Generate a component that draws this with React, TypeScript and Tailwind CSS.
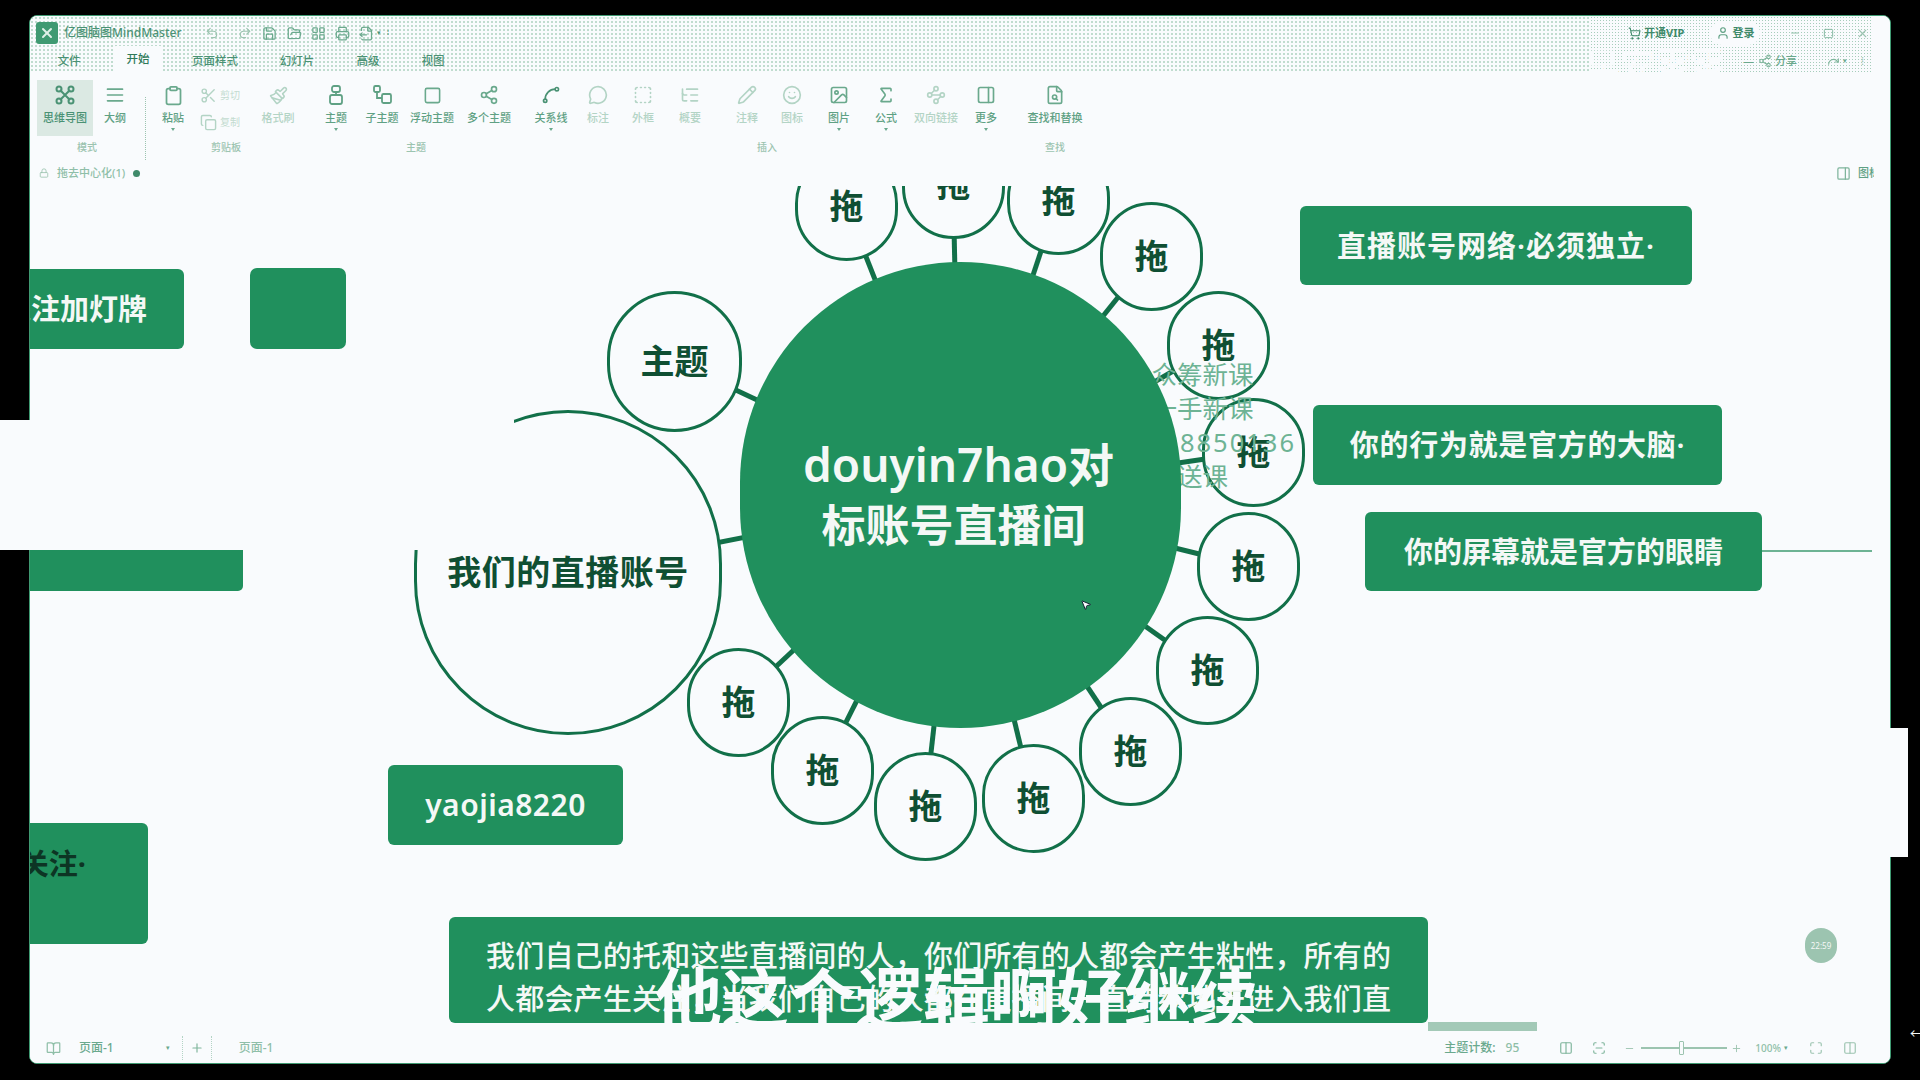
import React from "react";
import {
  AlignJustify, Clipboard, Scissors, Copy, Paintbrush, Square, Share2, Spline, MessageCircle, BoxSelect, ListTree,
  Pencil, Smile, Image, Sigma, Waypoints, PanelRight, FileSearch, ShoppingCart, User, Minus, X, Undo2, Redo2,
  Save, FolderOpen, LayoutGrid, Printer, FileOutput, Lock, Columns2, Plus, Maximize, ScanLine, BookOpen, MousePointer2, Redo,
} from "lucide-react";

const G = "#6aa98d";
const D = "#b3d4c5";

function MindIcon() {
  return (
    <svg width="22" height="22" viewBox="0 0 22 22" fill="none" stroke="#4a9274" strokeWidth="2">
      <path d="M6 6 16 16M16 6 6 16" />
      <circle cx="5" cy="5" r="2.5" />
      <circle cx="17" cy="5" r="2.5" />
      <circle cx="5" cy="17" r="2.5" />
      <circle cx="17" cy="17" r="2.5" />
    </svg>
  );
}
function TopicIcon() {
  return (
    <svg width="22" height="22" viewBox="0 0 22 22" fill="none" stroke="#5fa184" strokeWidth="1.8">
      <rect x="7" y="2" width="8" height="6" rx="2" />
      <path d="M11 8v3" />
      <rect x="5" y="11" width="12" height="9" rx="2" />
    </svg>
  );
}
function SubTopicIcon() {
  return (
    <svg width="22" height="22" viewBox="0 0 22 22" fill="none" stroke="#5fa184" strokeWidth="1.8">
      <rect x="3" y="2" width="6" height="6" rx="1.5" />
      <path d="M6 8v6h5" />
      <rect x="11" y="10" width="9" height="9" rx="1.5" />
    </svg>
  );
}

function Btn({ w, icon, label, dim, caret, active }: { w: string; icon: React.ReactNode; label: string; dim?: boolean; caret?: boolean; active?: boolean }) {
  return (
    <div className={`${w} h-[56px] flex flex-col items-center pt-[4px] ${active ? "bg-[#dbe9e3]" : ""}`}>
      <div className="h-[22px] flex items-center justify-center">{icon}</div>
      <div className={`mt-[5px] h-[14px] leading-[14px] text-[11px] font-medium whitespace-nowrap ${dim ? "text-[#b3d4c5]" : active ? "text-[#4a9274]" : "text-[#5fa184]"}`}>{label}</div>
      {caret && <div className="mt-[3px] w-0 h-0 border-l-[2px] border-r-[2px] border-t-[3px] border-l-transparent border-r-transparent border-t-[#6aa98d]" />}
    </div>
  );
}

function Group({ label, children }: { label: string; children: React.ReactNode }) {
  return (
    <div className="flex flex-col items-center">
      <div className="flex">{children}</div>
      <div className="mt-[4px] h-[14px] leading-[14px] text-[10px] font-medium text-[#9cc4b0]">{label}</div>
    </div>
  );
}

function Ribbon() {
  return (
    <div className="h-[94px] flex pl-[7px] pt-[8px] bg-[#f9fbfd] shrink-0">
      <Group label="模式">
        <Btn w="w-[56px]" active icon={<MindIcon />} label="思维导图" />
        <Btn w="w-[44px]" icon={<AlignJustify size={20} color={G} />} label="大纲" />
      </Group>
      <div className="ml-[8px] mt-[17px] h-[63px] border-l border-dotted border-[#9cc4b0]" />
      <div className="ml-[5px]">
        <Group label="剪贴板">
          <Btn w="w-[44px]" caret icon={<Clipboard size={21} color={G} />} label="粘贴" />
          <div className="w-[60px] h-[56px] pl-[5px] pt-[4px] flex flex-col gap-[6px]">
            <div className="flex items-center gap-[3px] h-[22px]">
              <Scissors size={17} color={D} />
              <span className="text-[10px] text-[#c3dcd0]">剪切</span>
            </div>
            <div className="flex items-center gap-[3px] h-[20px]">
              <Copy size={17} color={D} />
              <span className="text-[10px] text-[#c3dcd0]">复制</span>
            </div>
          </div>
          <Btn w="w-[46px]" dim icon={<Paintbrush size={19} color={D} />} label="格式刷" />
        </Group>
      </div>
      <div className="ml-[12px]">
        <Group label="主题">
          <Btn w="w-[46px]" caret icon={<TopicIcon />} label="主题" />
          <Btn w="w-[46px]" icon={<SubTopicIcon />} label="子主题" />
          <Btn w="w-[54px]" icon={<Square size={19} color={G} />} label="浮动主题" />
          <Btn w="w-[60px]" icon={<Share2 size={20} color={G} />} label="多个主题" />
        </Group>
      </div>
      <div className="ml-[8px]">
        <Group label="插入">
          <Btn w="w-[48px]" caret icon={<Spline size={20} color="#4a9274" />} label="关系线" />
          <Btn w="w-[46px]" dim icon={<MessageCircle size={20} color={D} />} label="标注" />
          <Btn w="w-[44px]" dim icon={<BoxSelect size={20} color={D} />} label="外框" />
          <Btn w="w-[50px]" dim icon={<ListTree size={20} color={D} />} label="概要" />
          <div className="w-[8px]" />
          <Btn w="w-[48px]" dim icon={<Pencil size={20} color={D} />} label="注释" />
          <Btn w="w-[42px]" dim icon={<Smile size={20} color={D} />} label="图标" />
          <Btn w="w-[52px]" caret icon={<Image size={20} color={G} />} label="图片" />
          <Btn w="w-[42px]" caret icon={<Sigma size={20} color={G} />} label="公式" />
          <Btn w="w-[58px]" dim icon={<Waypoints size={20} color={D} />} label="双向链接" />
          <Btn w="w-[42px]" caret icon={<PanelRight size={20} color={G} />} label="更多" />
        </Group>
      </div>
      <div className="ml-[12px]">
        <Group label="查找">
          <Btn w="w-[72px]" icon={<FileSearch size={20} color={G} />} label="查找和替换" />
        </Group>
      </div>
    </div>
  );
}

function Header() {
  const q = "#6aa98d";
  return (
    <div className="flex h-[56px] shrink-0">
      <div className="flex-1 flex flex-col bg-[radial-gradient(circle,#c0dccf_1px,transparent_1px)] bg-[length:4px_4px] bg-[#f9fbfd]">
        <div className="h-[34px] flex items-center pl-[6px]">
          <div className="w-[22px] h-[22px] rounded-[3px] bg-[#3f9a72] flex items-center justify-center">
            <X size={16} color="#dff0e8" strokeWidth={3} />
          </div>
          <span className="ml-[6px] w-[118px] text-[12px] font-medium whitespace-nowrap text-[#4a9274]">亿图脑图MindMaster</span>
          <div className="ml-[23px] flex items-center">
            <Undo2 size={14} color="#9cc4b0" />
            <Redo2 size={14} color="#9cc4b0" className="ml-[19px]" />
            <Save size={15} color={q} className="ml-[10px]" />
            <FolderOpen size={15} color={q} className="ml-[10px]" />
            <LayoutGrid size={15} color={q} className="ml-[9px]" />
            <Printer size={15} color={q} className="ml-[9px]" />
            <FileOutput size={15} color={q} className="ml-[9px]" />
            <span className="ml-[3px] text-[7px] text-[#4a9274]">▾</span>
            <span className="ml-[6px] text-[7px] text-[#4a9274]">⁞</span>
          </div>
        </div>
        <div className="h-[22px] flex items-stretch text-[11.5px] font-medium text-[#4a9274]">
          <div className="w-[64px] flex items-center justify-center pl-[14px]">文件</div>
          <div className="ml-[19px] w-[50px] -mt-[4px] bg-[#f9fbfd] rounded-t-[3px] flex items-center justify-center text-[#2f7a5a]">开始</div>
          <div className="ml-[22px] w-[60px] flex items-center justify-center">页面样式</div>
          <div className="ml-[27px] w-[50px] flex items-center justify-center">幻灯片</div>
          <div className="ml-[26px] w-[40px] flex items-center justify-center">高级</div>
          <div className="ml-[25px] w-[40px] flex items-center justify-center">视图</div>
        </div>
      </div>
      <div className="w-[282px] flex flex-col bg-[radial-gradient(circle,#a6cdbb_1px,transparent_1px)] bg-[length:3px_3px] bg-[#f9fbfd]">
        <div className="h-[34px] flex items-center text-[11px] font-bold text-[#3f8a6a]">
          <ShoppingCart size={13} color="#3f8a6a" className="ml-[38px]" />
          <span className="ml-[3px] w-[48px] whitespace-nowrap">开通VIP</span>
          <div className="ml-[18px] w-[50px] h-[24px] rounded-full bg-[#f9fbfd] flex items-center justify-center gap-[3px]">
            <User size={14} color="#5fa184" />
            <span>登录</span>
          </div>
          <Minus size={12} color="#8fbfa8" className="ml-[29px]" />
          <Square size={11} color="#7fb59c" className="ml-[22px]" />
          <X size={13} color="#9cc4b0" className="ml-[22px]" />
        </div>
        <div className="h-[22px] flex items-center text-[11px] text-[#6aa98d]">
          <span className="ml-[153px] text-[#6aa98d]">—</span>
          <Share2 size={14} color="#7fb59c" className="ml-[4px]" />
          <span className="ml-[3px] font-medium">分享</span>
          <Redo size={13} color="#7fb59c" className="ml-[30px]" />
          <span className="ml-[3px] text-[7px]">▾</span>
          <span className="ml-[14px] text-[#9cc4b0]">⁞</span>
        </div>
      </div>
      <div className="w-[18px] bg-[#f9fbfd]" />
    </div>
  );
}

const nodes = [
  "left-[765px] top-[-34px]",
  "left-[872px] top-[-56px]",
  "left-[977px] top-[-40px]",
  "left-[1070px] top-[16px]",
  "left-[1137px] top-[105px]",
  "left-[1172px] top-[212px]",
  "left-[1167px] top-[326px]",
  "left-[1126px] top-[430px]",
  "left-[1049px] top-[511px]",
  "left-[952px] top-[558px]",
  "left-[844px] top-[566px]",
  "left-[741px] top-[530px]",
  "left-[657px] top-[462px]",
];

const spokes = [
  [816, 20], [923, -2], [1028, 14], [1121, 70], [1188, 159], [1223, 266], [1218, 380], [1177, 484], [1100, 565], [1003, 612], [895, 620], [792, 584], [708, 516],
  [644, 175], [538, 386],
];

function Canvas() {
  return (
    <div className="relative flex-1 overflow-hidden bg-[#f9fbfd]">
      <svg className="absolute inset-0 w-full h-full" fill="none">
        {spokes.map(([x, y], i) => (
          <line key={i} x1={930} y1={309} x2={x} y2={y} stroke="#127049" strokeWidth="5" />
        ))}
        <line x1="1732" y1="365" x2="1842" y2="365" stroke="#6db394" strokeWidth="2" />
      </svg>

      {nodes.map((c, i) => (
        <div key={i} className={`absolute ${c} w-[103px] h-[109px] rounded-full border-[3px] border-[#127049] bg-[#f9fbfd] flex items-center justify-center text-[34px] font-bold text-[#0f4f33]`}>
          拖
        </div>
      ))}
      <div className="absolute left-[577px] top-[105px] w-[135px] h-[141px] rounded-full border-[3px] border-[#127049] bg-[#f9fbfd] flex items-center justify-center text-[34px] font-bold text-[#0f4f33]">
        主题
      </div>
      <div className="absolute left-[384px] top-[224px] w-[308px] h-[325px] rounded-full border-[3px] border-[#127049] bg-[#f9fbfd] flex items-center justify-center text-[34px] tracking-[0.5px] font-bold text-[#0f4f33] whitespace-nowrap">
        我们的直播账号
      </div>

      <div className="absolute left-[1096px] top-[171px] text-[25.5px] leading-[34px] text-[#6db394] whitespace-nowrap">
        <div>公众筹新课</div>
        <div>买一手新课</div>
        <div className="tracking-[2px] -ml-[22px]">V:1688850136</div>
        <div>免费送课</div>
      </div>

      <div className="absolute left-[710px] top-[76px] w-[441px] h-[466px] rounded-full bg-[#20905d] flex flex-col items-center justify-center text-[#f4f8f6] font-semibold">
        <div className="text-[46px] leading-[61px] whitespace-nowrap pr-[4px]">douyin7hao对</div>
        <div className="text-[44px] leading-[61px] pr-[14px] whitespace-nowrap">标账号直播间</div>
      </div>

      <MousePointer2 size={12} color="#123" fill="#f9fbfd" className="absolute left-[1050px] top-[413px]" />

      <div className="absolute left-[-100px] top-[83px] w-[254px] h-[80px] rounded-[6px] bg-[#20905d] flex items-center justify-end pr-[37px] text-[29px] font-semibold text-[#f4f8f6] whitespace-nowrap">关注加灯牌</div>
      <div className="absolute left-[220px] top-[82px] w-[96px] h-[81px] rounded-[7px] bg-[#20905d]" />
      <div className="absolute left-[-20px] top-[340px] w-[233px] h-[65px] rounded-[5px] bg-[#20905d]" />
      <div className="absolute left-[-60px] top-[637px] w-[178px] h-[121px] rounded-[6px] bg-[#20905d] flex items-start justify-end pt-[19px] pr-[62px] text-[29px] font-bold text-[#0d3524] whitespace-nowrap">关注·</div>
      <div className="absolute left-[358px] top-[579px] w-[235px] h-[80px] pb-[2px] rounded-[6px] bg-[#20905d] flex items-center justify-center text-[30px] tracking-[0.5px] font-semibold text-[#f4f8f6]">yaojia8220</div>

      <div className="absolute left-[1270px] top-[20px] w-[392px] h-[79px] rounded-[6px] bg-[#20905d] flex items-center justify-center text-[29px] tracking-[1px] font-semibold text-[#f4f8f6] whitespace-nowrap">直播账号网络·必须独立·</div>
      <div className="absolute left-[1283px] top-[219px] w-[409px] h-[80px] rounded-[6px] bg-[#20905d] flex items-center justify-center text-[29px] tracking-[0.7px] font-semibold text-[#f4f8f6] whitespace-nowrap">你的行为就是官方的大脑·</div>
      <div className="absolute left-[1335px] top-[326px] w-[397px] h-[79px] rounded-[6px] bg-[#20905d] flex items-center justify-center text-[29px] font-semibold text-[#f4f8f6] whitespace-nowrap">你的屏幕就是官方的眼睛</div>

      <div className="absolute left-[419px] top-[731px] w-[979px] h-[106px] rounded-[6px] bg-[#20905d] pl-[37px] pt-[17px] text-[29px] leading-[43px] tracking-[0.2px] font-medium text-[#f4f8f6] whitespace-nowrap">
        <div>我们自己的托和这些直播间的人，你们所有的人都会产生粘性，所有的</div>
        <div>人都会产生关注，当我们自己的人都在直播间一直持续地去进入我们直</div>
      </div>

      <div className="absolute left-[1398px] top-[836px] w-[109px] h-[9px] bg-[#a3c9b7]" />

      <div className="absolute left-[1775px] top-[742px] w-[32px] h-[35px] rounded-full bg-[#9cc4b0] flex items-center justify-center text-[8px] text-[#f4f8f6]">22:59</div>
    </div>
  );
}

function StatusBar() {
  return (
    <div className="h-[30px] shrink-0 flex items-center bg-[#f9fbfd] text-[12px] font-medium text-[#6aa98d]">
      <BookOpen size={15} color="#8fbfa8" className="ml-[16px]" />
      <span className="ml-[18px]">页面-1</span>
      <span className="ml-[52px] text-[7px]">▾</span>
      <div className="ml-[12px] w-[30px] h-[24px] border-x border-dotted border-[#b3d4c5] flex items-center justify-center">
        <Plus size={14} color="#7fb59c" />
      </div>
      <span className="ml-[27px] text-[#8fbfa8]">页面-1</span>
      <div className="flex-1" />
      <span>主题计数:</span>
      <span className="ml-[10px] text-[#8fbfa8]">95</span>
      <Columns2 size={14} color="#7fb59c" className="ml-[40px]" />
      <ScanLine size={14} color="#7fb59c" className="ml-[19px]" />
      <Minus size={11} color="#9cc4b0" className="ml-[18px]" />
      <div className="relative ml-[6px] w-[86px] h-[2px] bg-[#9cc4b0]">
        <div className="absolute left-[38px] top-[-6px] w-[5px] h-[14px] bg-[#f9fbfd] border border-[#9cc4b0] rounded-[1px]" />
      </div>
      <Plus size={11} color="#9cc4b0" className="ml-[4px]" />
      <span className="ml-[13px] text-[10px] text-[#8fbfa8]">100%</span>
      <span className="ml-[3px] text-[7px]">▾</span>
      <Maximize size={14} color="#9cc4b0" className="ml-[21px]" />
      <Columns2 size={14} color="#9cc4b0" className="ml-[20px] mr-[33px]" />
    </div>
  );
}

export default function App() {
  return (
    <div className="relative w-[1920px] h-[1080px] bg-black overflow-hidden [font-family:'Noto_Sans','Noto_Sans_CJK_SC',sans-serif]">
      <div className="pt-[15px] pl-[29px]">
        <div className="w-[1862px] h-[1049px] flex flex-col rounded-[8px] overflow-hidden border border-[#3f9a72] bg-[#f9fbfd]">
          <Header />
          <Ribbon />
          <div className="h-[20px] pb-[6px] shrink-0 flex items-center bg-[#f9fbfd] text-[11px] font-medium text-[#8fbfa8]">
            <Lock size={10} color="#9cc4b0" className="ml-[9px]" />
            <span className="ml-[8px]">拖去中心化(1)</span>
            <div className="ml-[8px] w-[7px] h-[7px] rounded-full bg-[#3f8a6a]" />
            <div className="flex-1" />
            <PanelRight size={15} color="#7fb59c" />
            <span className="ml-[7px] mr-[16px] w-[16px] overflow-hidden whitespace-nowrap text-[#5fa184]">图标</span>
          </div>
          <Canvas />
          <StatusBar />
        </div>
      </div>

      {/* patches laid over the captured video frame */}
      <div className="absolute left-0 top-[420px] w-[514px] h-[130px] bg-[#f9fbfd]" />
      <div className="absolute left-[1890px] top-[728px] w-[18px] h-[129px] bg-[#f9fbfd]" />
      <div className="absolute left-[1910px] top-[1024px] text-[13px] text-[#f4f8f6]">←</div>
      <div className="absolute left-[1585px] top-[48px] text-[35px] leading-[35px] text-[#f9fbfd] whitespace-nowrap">早安零零</div>
      <div className="absolute left-[655px] top-[960px] text-[67px] leading-[76px] font-bold text-[#f9fbfd] whitespace-nowrap">他这个逻辑啊好继续</div>
    </div>
  );
}
